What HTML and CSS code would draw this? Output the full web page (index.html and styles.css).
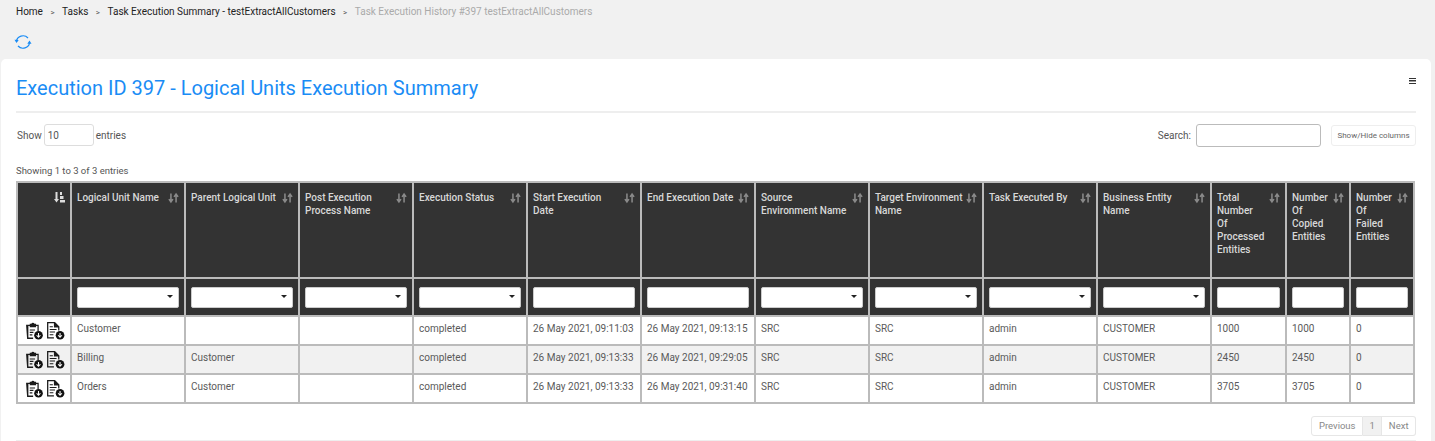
FILE: index.html
```html
<!DOCTYPE html>
<html>
<head>
<meta charset="utf-8" />
<title>Task Execution History</title>
<link rel="stylesheet" href="styles.css">
</head>
<body>
<svg class="defs" width="0" height="0">
  <symbol id="sort" viewBox="0 0 12 12">
    <path d="M3.200 1v8M1 7.200l2.200 3 2.200-3M8.800 11V3M6.600 4.800l2.200-3 2.200 3" fill="none" stroke="#8a8a8a" stroke-width="1.700"/>
  </symbol>
  <symbol id="clip" viewBox="0 0 18 18">
    <path d="M1 3.500h3.500v-1h1.500a1.700 1.700 0 0 1 3 0h1.500v1h2.500v6h-1.200v-4.800h-1.300v1.300h-6v-1.300h-1.300v11h4.500v1.300h-5.700z" fill="#1a1a1a"/>
    <path d="M4.500 8h5v1.100h-5zM4.500 10.300h3.500v1.100h-3.500zM4.500 12.600h2.500v1.100h-2.500z" fill="#1a1a1a"/>
    <circle cx="12.800" cy="13.500" r="4.100" fill="#111"/>
    <path d="M12.800 11.300v3.800M11 13.500l1.800 1.900 1.800-1.900" fill="none" stroke="#fff" stroke-width="1"/>
  </symbol>
  <symbol id="doc" viewBox="0 0 18 18">
    <path d="M1 1h7.500l4.200 4.200v3.800h-1.200V6.200h-4V2.200H2.200v13.100h5.300v1.200H1z" fill="#1a1a1a"/>
    <path d="M3.500 5h3v1h-3zM3.500 7.500h6.500v1H3.500zM3.500 10h5v1h-5zM3.500 12.500h3.500v1H3.500z" fill="#1a1a1a"/>
    <circle cx="13.300" cy="13.500" r="4.100" fill="#111"/>
    <path d="M13.300 11.300v3.800M11.500 13.500l1.800 1.900 1.800-1.900" fill="none" stroke="#fff" stroke-width="1"/>
  </symbol>
</svg>

<div class="crumbs">
  <a>Home</a><i>&gt;</i><a>Tasks</a><i>&gt;</i><a>Task Execution Summary - testExtractAllCustomers</a><i>&gt;</i><span>Task Execution History #397 testExtractAllCustomers</span>
</div>
<div class="refresh">
  <svg width="18" height="16" viewBox="0 0 18 16"><path d="M2.500 7.500a6.500 6 0 0 1 11.500-3.500M15.500 8.500a6.500 6 0 0 1-11.500 3.500" fill="none" stroke="#1a8cf5" stroke-width="1.200"/><path d="M0.500 5.800l2 3.200 2.200-3zM13.300 9.800l2.200-3.300 2 3.300z" fill="#1a8cf5"/></svg>
</div>

<div class="card">
  <div class="card-head">
    <h1>Execution ID 397 - Logical Units Execution Summary</h1>
    <div class="burger"></div>
  </div>
  <div class="tools">
    <div class="len">Show <input type="text" class="len-input" value="10" /> entries</div>
    <div class="search">Search: <input type="text" class="search-input" /><button class="btn-cols">Show/Hide columns</button></div>
  </div>
  <div class="info">Showing 1 to 3 of 3 entries</div>
  <div class="table-wrap">
    <table class="grid">
      <colgroup>
        <col class="c-act"><col class="c-std"><col class="c-std"><col class="c-std"><col class="c-std"><col class="c-std"><col class="c-std"><col class="c-std"><col class="c-std"><col class="c-std"><col class="c-std"><col class="c-total"><col class="c-num"><col class="c-num"><col class="c-more">
      </colgroup>
      <thead>
        <tr class="head-row">
          <th><svg class="first-sort" width="11" height="11" viewBox="0 0 11 11"><path d="M1.500 0h2v7h1.500L2.500 10.500 0 7h1.500zM6 0h2v3H6zM6 4h3.500v3H6zM6 8h5v2.500H6z" fill="#ddd"/></svg></th>
          <th><div class="th-in"><span>Logical Unit Name</span><svg class="sort"><use href="#sort"/></svg></div></th>
          <th><div class="th-in"><span>Parent Logical Unit</span><svg class="sort"><use href="#sort"/></svg></div></th>
          <th><div class="th-in"><span>Post Execution Process Name</span><svg class="sort"><use href="#sort"/></svg></div></th>
          <th><div class="th-in"><span>Execution Status</span><svg class="sort"><use href="#sort"/></svg></div></th>
          <th><div class="th-in"><span>Start Execution Date</span><svg class="sort"><use href="#sort"/></svg></div></th>
          <th><div class="th-in"><span>End Execution Date</span><svg class="sort"><use href="#sort"/></svg></div></th>
          <th><div class="th-in"><span>Source Environment Name</span><svg class="sort"><use href="#sort"/></svg></div></th>
          <th><div class="th-in"><span>Target Environment Name</span><svg class="sort"><use href="#sort"/></svg></div></th>
          <th><div class="th-in"><span>Task Executed By</span><svg class="sort"><use href="#sort"/></svg></div></th>
          <th><div class="th-in"><span>Business Entity Name</span><svg class="sort"><use href="#sort"/></svg></div></th>
          <th><div class="th-in"><span>Total<br>Number<br>Of<br>Processed<br>Entities</span><svg class="sort"><use href="#sort"/></svg></div></th>
          <th><div class="th-in"><span>Number Of Copied Entities</span><svg class="sort"><use href="#sort"/></svg></div></th>
          <th><div class="th-in"><span>Number Of Failed Entities</span><svg class="sort"><use href="#sort"/></svg></div></th>
          <th></th>
        </tr>
        <tr class="filter-row">
          <th></th>
          <th><div class="fsel"></div></th>
          <th><div class="fsel"></div></th>
          <th><div class="fsel"></div></th>
          <th><div class="fsel"></div></th>
          <th><div class="ftxt"></div></th>
          <th><div class="ftxt"></div></th>
          <th><div class="fsel"></div></th>
          <th><div class="fsel"></div></th>
          <th><div class="fsel"></div></th>
          <th><div class="fsel"></div></th>
          <th><div class="ftxt"></div></th>
          <th><div class="ftxt"></div></th>
          <th><div class="ftxt"></div></th>
          <th></th>
        </tr>
      </thead>
      <tbody>
        <tr>
          <td class="acts"><svg class="ic"><use href="#clip"/></svg><svg class="ic"><use href="#doc"/></svg></td>
          <td>Customer</td><td></td><td></td><td>completed</td><td>26 May 2021, 09:11:03</td><td>26 May 2021, 09:13:15</td><td>SRC</td><td>SRC</td><td>admin</td><td>CUSTOMER</td><td>1000</td><td>1000</td><td>0</td><td></td>
        </tr>
        <tr class="odd">
          <td class="acts"><svg class="ic"><use href="#clip"/></svg><svg class="ic"><use href="#doc"/></svg></td>
          <td>Billing</td><td>Customer</td><td></td><td>completed</td><td>26 May 2021, 09:13:33</td><td>26 May 2021, 09:29:05</td><td>SRC</td><td>SRC</td><td>admin</td><td>CUSTOMER</td><td>2450</td><td>2450</td><td>0</td><td></td>
        </tr>
        <tr>
          <td class="acts"><svg class="ic"><use href="#clip"/></svg><svg class="ic"><use href="#doc"/></svg></td>
          <td>Orders</td><td>Customer</td><td></td><td>completed</td><td>26 May 2021, 09:13:33</td><td>26 May 2021, 09:31:40</td><td>SRC</td><td>SRC</td><td>admin</td><td>CUSTOMER</td><td>3705</td><td>3705</td><td>0</td><td></td>
        </tr>
      </tbody>
    </table>
  </div>
  <div class="pager">
    <a>Previous</a><a class="cur">1</a><a>Next</a>
  </div>
  <div class="foot-line"></div>
</div>
</body>
</html>
```

FILE: styles.css
```css
*{margin:0; padding:0; box-sizing:border-box;}
html,body{height:441px; overflow:hidden;}
body{
	background-color:#f1f1f1;
	font-family:"Roboto","Liberation Sans",sans-serif;
	font-size:10px;
	color:#555;
}
.defs{position:absolute;}
/***************** top *****************/
.crumbs{
	height:24px;
	padding:6px 0 0 16px;
	line-height:12px;
	font-size:10px;
	color:#222;
}
.crumbs i{
	font-style:normal;
	color:#555;
	font-size:8px;
	margin:0 7.500px;
}
.crumbs span{color:#aaa;}
.refresh{
	height:35px;
	padding:10px 0 0 14px;
}
/***************** card *****************/
.card{
	margin:0 4px 0 1px;
	height:400px;
	background-color:#fff;
	border-radius:5px 5px 0 0;
	padding:0 15px;
}
.card-head{
	display:flex;
	justify-content:space-between;
	height:54px;
	padding-top:16px;
	border-bottom:2px solid #eee;
}
.card-head h1{
	font-size:20px;
	font-weight:400;
	line-height:26px;
	color:#1a8cf5;
}
.burger{
	width:7px;
	height:6px;
	margin-top:3px;
	border-top:1.500px solid #333;
	border-bottom:1.500px solid #333;
	background:linear-gradient(#333,#333) center/100% 1.500px no-repeat;
}
.tools{
	display:flex;
	justify-content:space-between;
	height:22px;
	margin-top:11px;
}
.len{display:flex; align-items:center; gap:2px; padding-left:1px;}
.len-input{
	width:50px;
	height:22px;
	border:1px solid #ddd;
	border-radius:3px;
	padding-left:3px;
	font:10px "Roboto",sans-serif;
	color:#555;
}
.search{display:flex; align-items:center;}
.search-input{
	width:125px;
	height:23px;
	margin-left:5px;
	border:1px solid #bbb;
	border-radius:3px;
}
.btn-cols{
	width:85px;
	height:21px;
	margin-left:10px;
	border:1px solid #eee;
	border-radius:3px;
	background:#fff;
	font:8px "Roboto",sans-serif;
	color:#666;
}
.info{
	margin-top:19px;
	height:16px;
	line-height:12px;
	font-size:9.500px;
}
/***************** table *****************/
.table-wrap{
	width:1399px;
	overflow:hidden;
}
.grid{
	table-layout:fixed;
	width:1427px;
	border-collapse:collapse;
	border:1px solid #bbb;
}
.c-act{width:54px;}
.c-std{width:114px;}
.c-total{width:75px;}
.c-num{width:64px;}
.c-more{width:30px;}
.grid th,.grid td{
	border:2px solid #bbb;
	text-align:left;
	vertical-align:top;
}
.grid th{
	background-color:#333;
	color:#d8d8d8;
	font-weight:500;
	line-height:13px;
	padding:8px 5px;
}
.head-row{height:96px;}
.th-in{display:flex; justify-content:space-between; gap:2px;}
.sort{flex:none; width:11px; height:12px; margin-top:1px;}
.first-sort{float:right; margin-top:1px;}
.filter-row{height:38px;}
.filter-row th{padding:8px 5px 0;}
.fsel,.ftxt{
	height:21px;
	background:#fff;
	border:1px solid #ccc;
	border-radius:2px;
	position:relative;
}
.fsel::after{
	content:"";
	position:absolute;
	right:5px;
	top:7px;
	border-left:3.500px solid transparent;
	border-right:3.500px solid transparent;
	border-top:3.500px solid #222;
}
.grid td{
	height:29px;
	padding:6px 5px 0;
	line-height:12px;
	color:#5a5a5a;
}
.grid tbody tr.odd td{background-color:#f1f1f1;}
.grid td.acts{padding:4px 0 0 7px; white-space:nowrap;}
.ic{width:19px; height:19px; margin-right:2px;}
/***************** pager *****************/
.pager{
	display:flex;
	justify-content:flex-end;
	margin-top:12px;
}
.pager a{
	height:20px;
	line-height:18px;
	padding:0 6.500px;
	border:1px solid #e6e6e6;
	border-left:none;
	color:#888;
	font-size:9.500px;
}
.pager a:first-child{border-left:1px solid #e6e6e6; border-radius:3px 0 0 3px;}
.pager a:last-child{border-radius:0 3px 3px 0;}
.pager .cur{background-color:#f1f1f1;}
.foot-line{
	margin-top:4px;
	border-top:1px solid #eee;
}
```
